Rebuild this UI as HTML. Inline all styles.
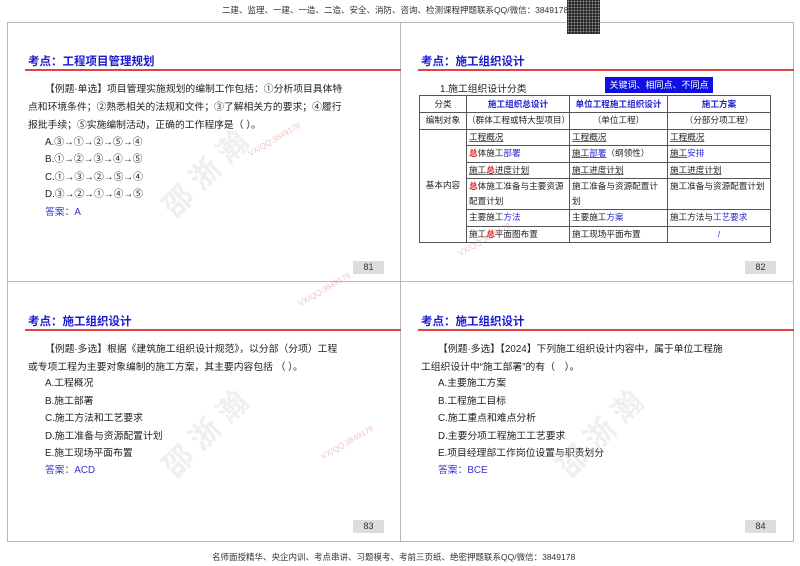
<!DOCTYPE html>
<html><head><meta charset="utf-8">
<style>
*{margin:0;padding:0;box-sizing:border-box}
body{width:800px;height:566px;background:#fff;position:relative;overflow:hidden;font-family:"Liberation Sans","Noto Sans CJK SC",sans-serif;color:#222}
.a{position:absolute;white-space:nowrap}
.panel{position:absolute;border:1px solid #b8b8b8;background:#fff}
.title{position:absolute;font-size:11.5px;font-weight:bold;color:#1a1ad0}
.line{position:absolute;height:1.5px;background:#d44}
.t{position:absolute;font-size:9.8px;white-space:nowrap;color:#222}
.pg{position:absolute;width:31px;height:13px;background:#dcdcdc;font-size:9px;text-align:center;line-height:13px;color:#333}
.ans{color:#3333cc}
table{position:absolute;border-collapse:collapse;font-size:8.6px;table-layout:fixed}
td{border:1px solid #555;padding:0 2px;height:16.5px;line-height:15px;vertical-align:top;white-space:nowrap;overflow:hidden}
th{border:1px solid #555;font-weight:bold;color:#2222cc;height:17px;font-size:8.6px;white-space:nowrap}
u{text-decoration:underline;text-decoration-color:#666}
.r{color:#e02020;font-weight:bold}
.b{color:#2b2bd0}
.wm{position:absolute;color:rgba(210,210,210,0.35);font-weight:bold;font-size:30px;transform:rotate(-45deg)}
.wq{position:absolute;color:rgba(220,120,120,0.45);font-size:8px;transform:rotate(-30deg)}
</style></head><body>
<div class="a" style="left:222px;top:4px;font-size:8.5px;color:#333">二建、监理、一建、一造、二造、安全、消防、咨询、检测课程押题联系QQ/微信：3849178</div>
<div class="a" style="left:567px;top:0;width:33px;height:34px;background:#2a2a2a;background-image:radial-gradient(#999 0.7px,transparent 1px);background-size:3px 3px"></div>

<div class="panel" style="left:7px;top:22px;width:394px;height:260px"></div>
<div class="panel" style="left:400px;top:22px;width:394px;height:260px"></div>
<div class="panel" style="left:7px;top:281px;width:394px;height:261px"></div>
<div class="panel" style="left:400px;top:281px;width:394px;height:261px"></div>
<div class="a" style="left:567px;top:0;width:33px;height:34px;background:#2a2a2a;background-image:radial-gradient(#999 0.7px,transparent 1px);background-size:3px 3px"></div>

<!-- Panel 81 -->
<div class="title" style="left:28px;top:53px">考点：工程项目管理规划</div>
<div class="line" style="left:25px;top:69px;width:376px"></div>
<div class="t" style="left:45px;top:81px">【例题·单选】项目管理实施规划的编制工作包括：①分析项目具体特</div>
<div class="t" style="left:28px;top:99px">点和环境条件；②熟悉相关的法规和文件；③了解相关方的要求；④履行</div>
<div class="t" style="left:28px;top:117px">报批手续；⑤实施编制活动，正确的工作程序是（ ）。</div>
<div class="t" style="left:45px;top:134px">A.③→①→②→⑤→④</div>
<div class="t" style="left:45px;top:151px">B.①→②→③→④→⑤</div>
<div class="t" style="left:45px;top:169px">C.①→③→②→⑤→④</div>
<div class="t" style="left:45px;top:186px">D.③→②→①→④→⑤</div>
<div class="t ans" style="left:45px;top:204px">答案：A</div>
<div class="pg" style="left:353px;top:261px">81</div>

<!-- Panel 82 -->
<div class="title" style="left:421px;top:53px">考点：施工组织设计</div>
<div class="line" style="left:418px;top:69px;width:376px"></div>
<div class="t" style="left:440px;top:81px">1.施工组织设计分类</div>
<div class="a" style="left:605px;top:77px;width:108px;height:16px;background:#1010e0;color:#fff;font-size:9px;line-height:16px;text-align:center">关键词、相同点、不同点</div>
<table style="left:419px;top:95px;width:351px">
<colgroup><col style="width:47px"><col style="width:103px"><col style="width:98px"><col style="width:103px"></colgroup>
<tr><th style="color:#222;font-weight:normal">分类</th><th>施工组织总设计</th><th>单位工程施工组织设计</th><th>施工方案</th></tr>
<tr><td style="text-align:center;padding:0">编制对象</td><td style="padding:0">（群体工程或特大型项目）</td><td style="text-align:center">（单位工程）</td><td style="text-align:center">（分部分项工程）</td></tr>
<tr><td rowspan="7" style="text-align:center;vertical-align:middle;padding:0">基本内容</td><td><u>工程概况</u></td><td><u>工程概况</u></td><td><u>工程概况</u></td></tr>
<tr><td><span class="r">总</span>体施工<span class="b">部署</span></td><td><u>施工<span class="b">部署</span></u>（纲领性）</td><td><u>施工</u><span class="b">安排</span></td></tr>
<tr><td><u>施工<span class="r">总</span>进度计划</u></td><td><u>施工进度计划</u></td><td><u>施工进度计划</u></td></tr>
<tr><td style="height:31px;white-space:normal"><span class="r">总</span>体施工准备与主要资源配置计划</td><td style="white-space:normal">施工准备与资源配置计划</td><td>施工准备与资源配置计划</td></tr>
<tr><td>主要施工<span class="b">方法</span></td><td>主要施工<span class="b">方案</span></td><td>施工方法与<span class="b">工艺要求</span></td></tr>
<tr><td>施工<span class="r">总</span>平面图布置</td><td>施工现场平面布置</td><td style="text-align:center" class="b">/</td></tr>
</table>
<div class="pg" style="left:745px;top:261px">82</div>

<!-- Panel 83 -->
<div class="title" style="left:28px;top:313px">考点：施工组织设计</div>
<div class="line" style="left:25px;top:329px;width:376px"></div>
<div class="t" style="left:45px;top:341px">【例题·多选】根据《建筑施工组织设计规范》，以分部（分项）工程</div>
<div class="t" style="left:28px;top:359px">或专项工程为主要对象编制的施工方案，其主要内容包括 （ ）。</div>
<div class="t" style="left:45px;top:375px">A.工程概况</div>
<div class="t" style="left:45px;top:393px">B.施工部署</div>
<div class="t" style="left:45px;top:410px">C.施工方法和工艺要求</div>
<div class="t" style="left:45px;top:428px">D.施工准备与资源配置计划</div>
<div class="t" style="left:45px;top:445px">E.施工现场平面布置</div>
<div class="t ans" style="left:45px;top:462px">答案：ACD</div>
<div class="pg" style="left:353px;top:520px">83</div>

<!-- Panel 84 -->
<div class="title" style="left:421px;top:313px">考点：施工组织设计</div>
<div class="line" style="left:418px;top:329px;width:376px"></div>
<div class="t" style="left:438px;top:341px">【例题·多选】【2024】下列施工组织设计内容中，属于单位工程施</div>
<div class="t" style="left:421px;top:359px">工组织设计中“施工部署”的有（　）。</div>
<div class="t" style="left:438px;top:375px">A.主要施工方案</div>
<div class="t" style="left:438px;top:393px">B.工程施工目标</div>
<div class="t" style="left:438px;top:410px">C.施工重点和难点分析</div>
<div class="t" style="left:438px;top:428px">D.主要分项工程施工工艺要求</div>
<div class="t" style="left:438px;top:445px">E.项目经理部工作岗位设置与职责划分</div>
<div class="t ans" style="left:438px;top:462px">答案：BCE</div>
<div class="pg" style="left:745px;top:520px">84</div>

<!-- watermarks -->
<div class="wm" style="left:150px;top:150px">邵 浙 瀚</div>
<div class="wm" style="left:150px;top:410px">邵 浙 瀚</div>
<div class="wm" style="left:545px;top:410px">邵 浙 瀚</div>
<div class="wq" style="left:245px;top:135px">VX/QQ:3849178</div>
<div class="wq" style="left:318px;top:438px">VX/QQ:3849178</div>
<div class="wq" style="left:295px;top:285px">VX/QQ:3849178</div>
<div class="wq" style="left:455px;top:235px">VX/QQ:3849178</div>

<div class="a" style="left:212px;top:551px;font-size:8.5px;color:#333">名师面授精华、央企内训、考点串讲、习题模考、考前三页纸、绝密押题联系QQ/微信：3849178</div>
</body></html>
